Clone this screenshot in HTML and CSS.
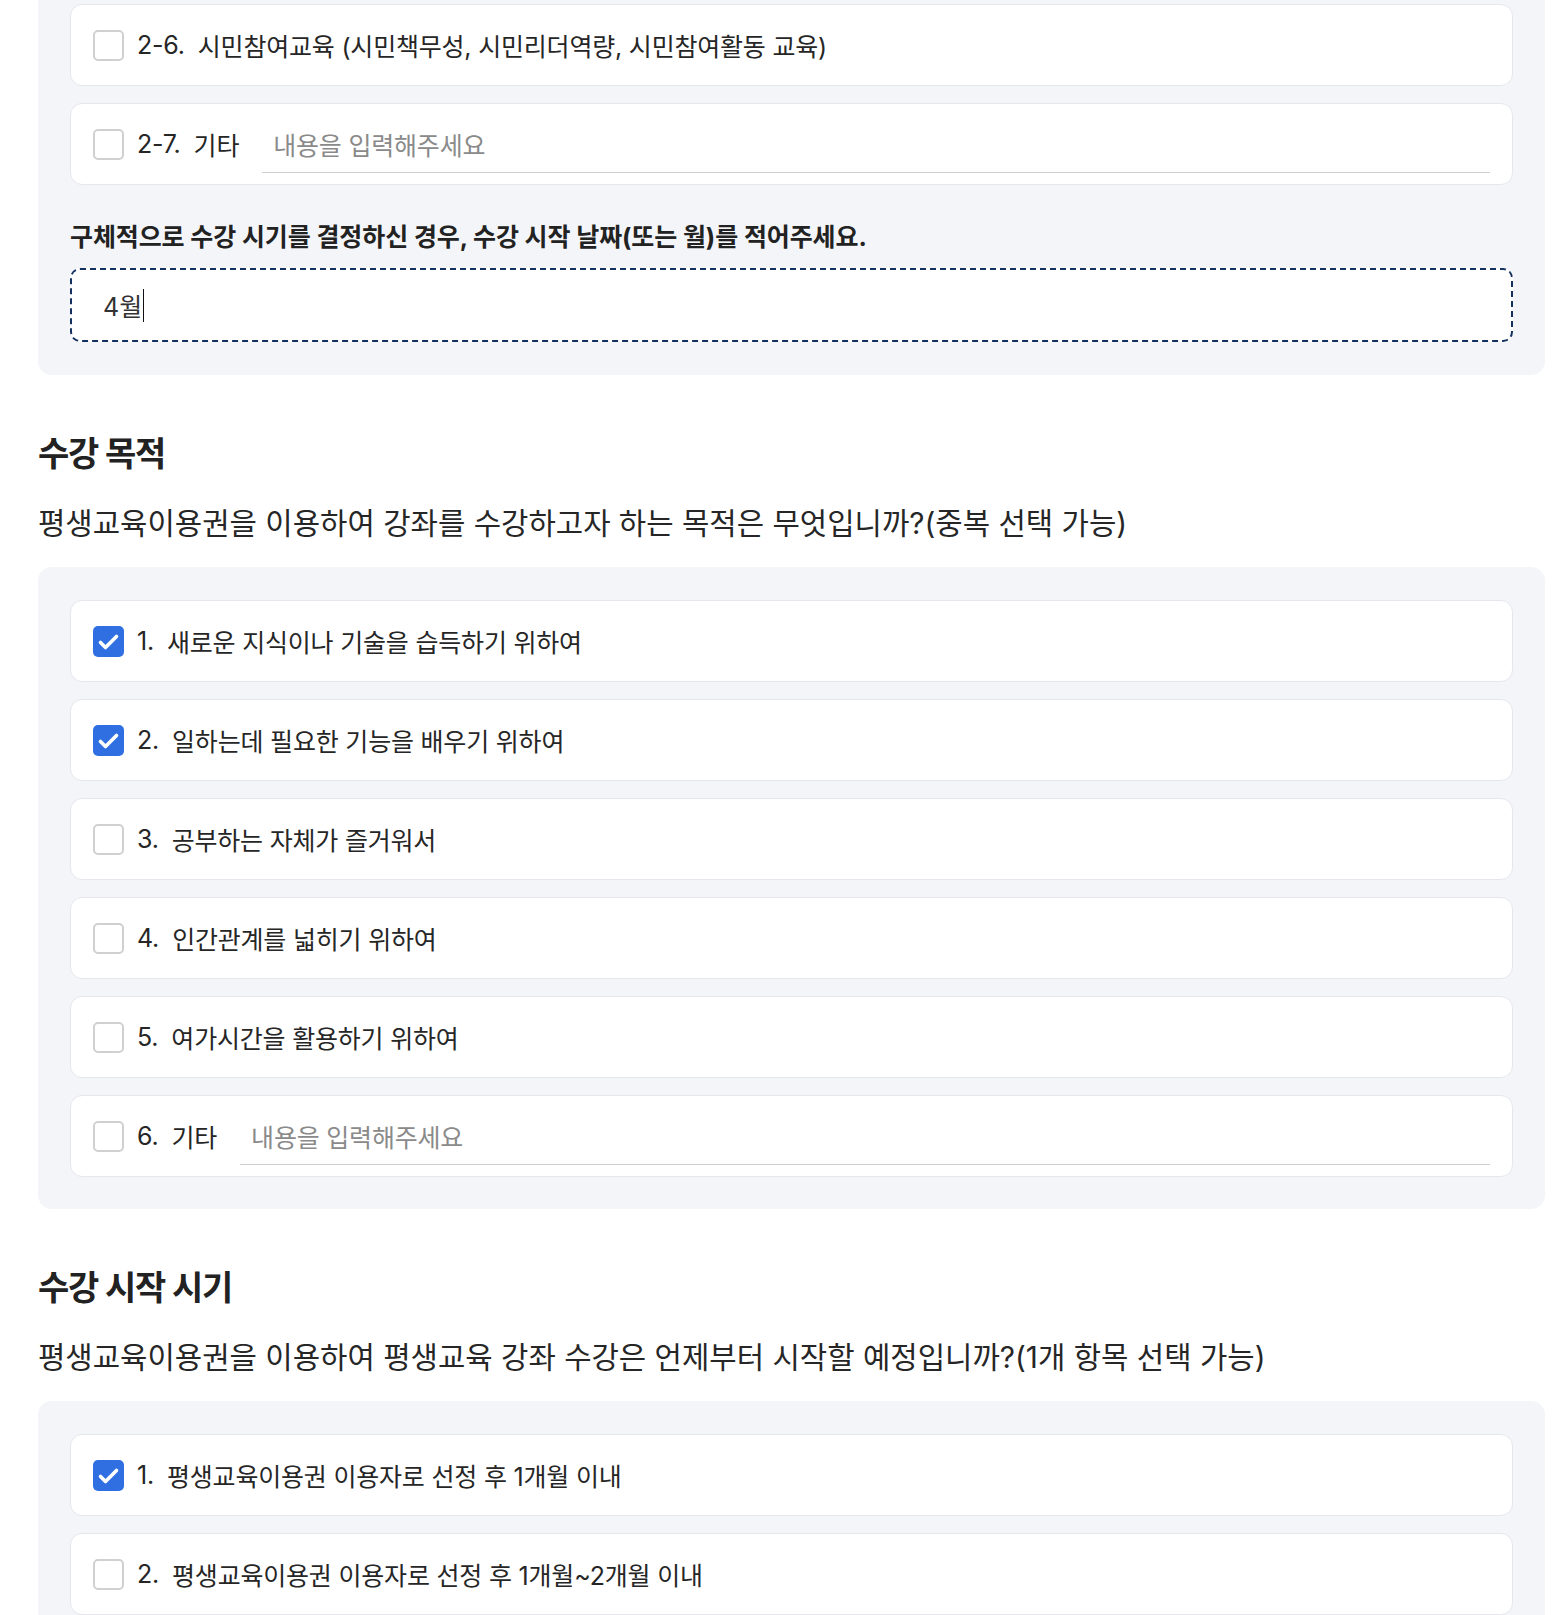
FILE: index.html
```html
<!DOCTYPE html>
<html lang="ko">
<head>
<meta charset="utf-8">
<title>평생교육이용권 설문</title>
<link rel="stylesheet" href="styles.css">
</head>
<body>
<main class="page">
  <section class="panel panel-first">
    <div class="options">
      <label class="option">
        <span class="box"></span>
        <span class="num">2-6.</span>
        <span class="txt">시민참여교육 (시민책무성, 시민리더역량, 시민참여활동 교육)</span>
      </label>
      <label class="option">
        <span class="box"></span>
        <span class="num">2-7.</span>
        <span class="txt">기타</span>
        <span class="etc-input">내용을 입력해주세요</span>
      </label>
    </div>
    <p class="field-label">구체적으로 수강 시기를 결정하신 경우, 수강 시작 날짜(또는 월)를 적어주세요.</p>
    <div class="text-field">4월<span class="caret"></span></div>
  </section>

  <section class="question">
    <h2 class="q-title">수강 목적</h2>
    <p class="q-desc">평생교육이용권을 이용하여 강좌를 수강하고자 하는 목적은 무엇입니까?(중복 선택 가능)</p>
    <div class="panel">
      <div class="options">
        <label class="option">
          <span class="box checked"><svg viewBox="0 0 31 31" width="31" height="31"><path d="M7.5 16.5 L12.5 21.5 L23.5 10.5" fill="none" stroke="#fff" stroke-width="3.6" stroke-linecap="round" stroke-linejoin="round"/></svg></span>
          <span class="num">1.</span>
          <span class="txt">새로운 지식이나 기술을 습득하기 위하여</span>
        </label>
        <label class="option">
          <span class="box checked"><svg viewBox="0 0 31 31" width="31" height="31"><path d="M7.5 16.5 L12.5 21.5 L23.5 10.5" fill="none" stroke="#fff" stroke-width="3.6" stroke-linecap="round" stroke-linejoin="round"/></svg></span>
          <span class="num">2.</span>
          <span class="txt">일하는데 필요한 기능을 배우기 위하여</span>
        </label>
        <label class="option">
          <span class="box"></span>
          <span class="num">3.</span>
          <span class="txt">공부하는 자체가 즐거워서</span>
        </label>
        <label class="option">
          <span class="box"></span>
          <span class="num">4.</span>
          <span class="txt">인간관계를 넓히기 위하여</span>
        </label>
        <label class="option">
          <span class="box"></span>
          <span class="num">5.</span>
          <span class="txt">여가시간을 활용하기 위하여</span>
        </label>
        <label class="option">
          <span class="box"></span>
          <span class="num">6.</span>
          <span class="txt">기타</span>
          <span class="etc-input">내용을 입력해주세요</span>
        </label>
      </div>
    </div>
  </section>

  <section class="question">
    <h2 class="q-title">수강 시작 시기</h2>
    <p class="q-desc">평생교육이용권을 이용하여 평생교육 강좌 수강은 언제부터 시작할 예정입니까?(1개 항목 선택 가능)</p>
    <div class="panel">
      <div class="options">
        <label class="option">
          <span class="box checked"><svg viewBox="0 0 31 31" width="31" height="31"><path d="M7.5 16.5 L12.5 21.5 L23.5 10.5" fill="none" stroke="#fff" stroke-width="3.6" stroke-linecap="round" stroke-linejoin="round"/></svg></span>
          <span class="num">1.</span>
          <span class="txt">평생교육이용권 이용자로 선정 후 1개월 이내</span>
        </label>
        <label class="option">
          <span class="box"></span>
          <span class="num">2.</span>
          <span class="txt">평생교육이용권 이용자로 선정 후 1개월~2개월 이내</span>
        </label>
      </div>
    </div>
  </section>
</main>
</body>
</html>
```

FILE: styles.css
```css
* { box-sizing: border-box; }
html, body {
  margin: 0;
  padding: 0;
  background: #ffffff;
  overflow: hidden;
}
body {
  font-family: Inter, "Noto Sans CJK KR", sans-serif;
  color: #222222;
}
.page {
  padding: 0 19px 0 38px;
}
.panel {
  background: #f4f5f9;
  border-radius: 14px;
  padding: 33px 32px 32px 32px;
}
.panel-first {
  margin-top: -29px;
  padding-bottom: 33px;
}
.options {
  display: flex;
  flex-direction: column;
  gap: 17px;
}
.option {
  display: flex;
  align-items: center;
  height: 82px;
  padding: 0 22px;
  background: #ffffff;
  border: 1px solid #e5e7ed;
  border-radius: 12px;
  font-size: 25px;
  letter-spacing: -0.2px;
  color: #262626;
}
.box {
  flex: none;
  width: 31px;
  height: 31px;
  border: 2px solid #d0d0d0;
  border-radius: 5px;
  background: #ffffff;
  margin-right: 13px;
  display: flex;
}
.box.checked {
  background: #2f6fe2;
  border: none;
}
.num {
  margin-right: 13px;
}
.txt {
  white-space: nowrap;
}
.etc-input {
  flex: 1;
  height: 58px;
  margin-left: 23px;
  padding-left: 11px;
  display: flex;
  align-items: center;
  border-bottom: 1px solid #cfcfcf;
  color: #8a8a8a;
}
.field-label {
  margin: 35px 0 14px 0;
  font-size: 25px;
  font-weight: 700;
  line-height: 34px;
  color: #222222;
  letter-spacing: -0.1px;
}
.text-field {
  height: 74px;
  border: 2px dashed #14305e;
  border-radius: 10px;
  background: #ffffff;
  padding: 0 31px;
  display: flex;
  align-items: center;
  font-size: 25px;
  color: #333333;
}
.caret {
  display: inline-block;
  width: 1px;
  height: 33px;
  background: #111111;
  margin-left: 1px;
}
.question {
  margin-top: 59px;
}
.q-title {
  margin: 0;
  font-size: 34px;
  font-weight: 700;
  line-height: 40px;
  letter-spacing: -1.2px;
  color: #222222;
}
.q-desc {
  margin: 29px 0 24px 0;
  font-size: 29.75px;
  line-height: 40px;
  color: #262626;
}
```
